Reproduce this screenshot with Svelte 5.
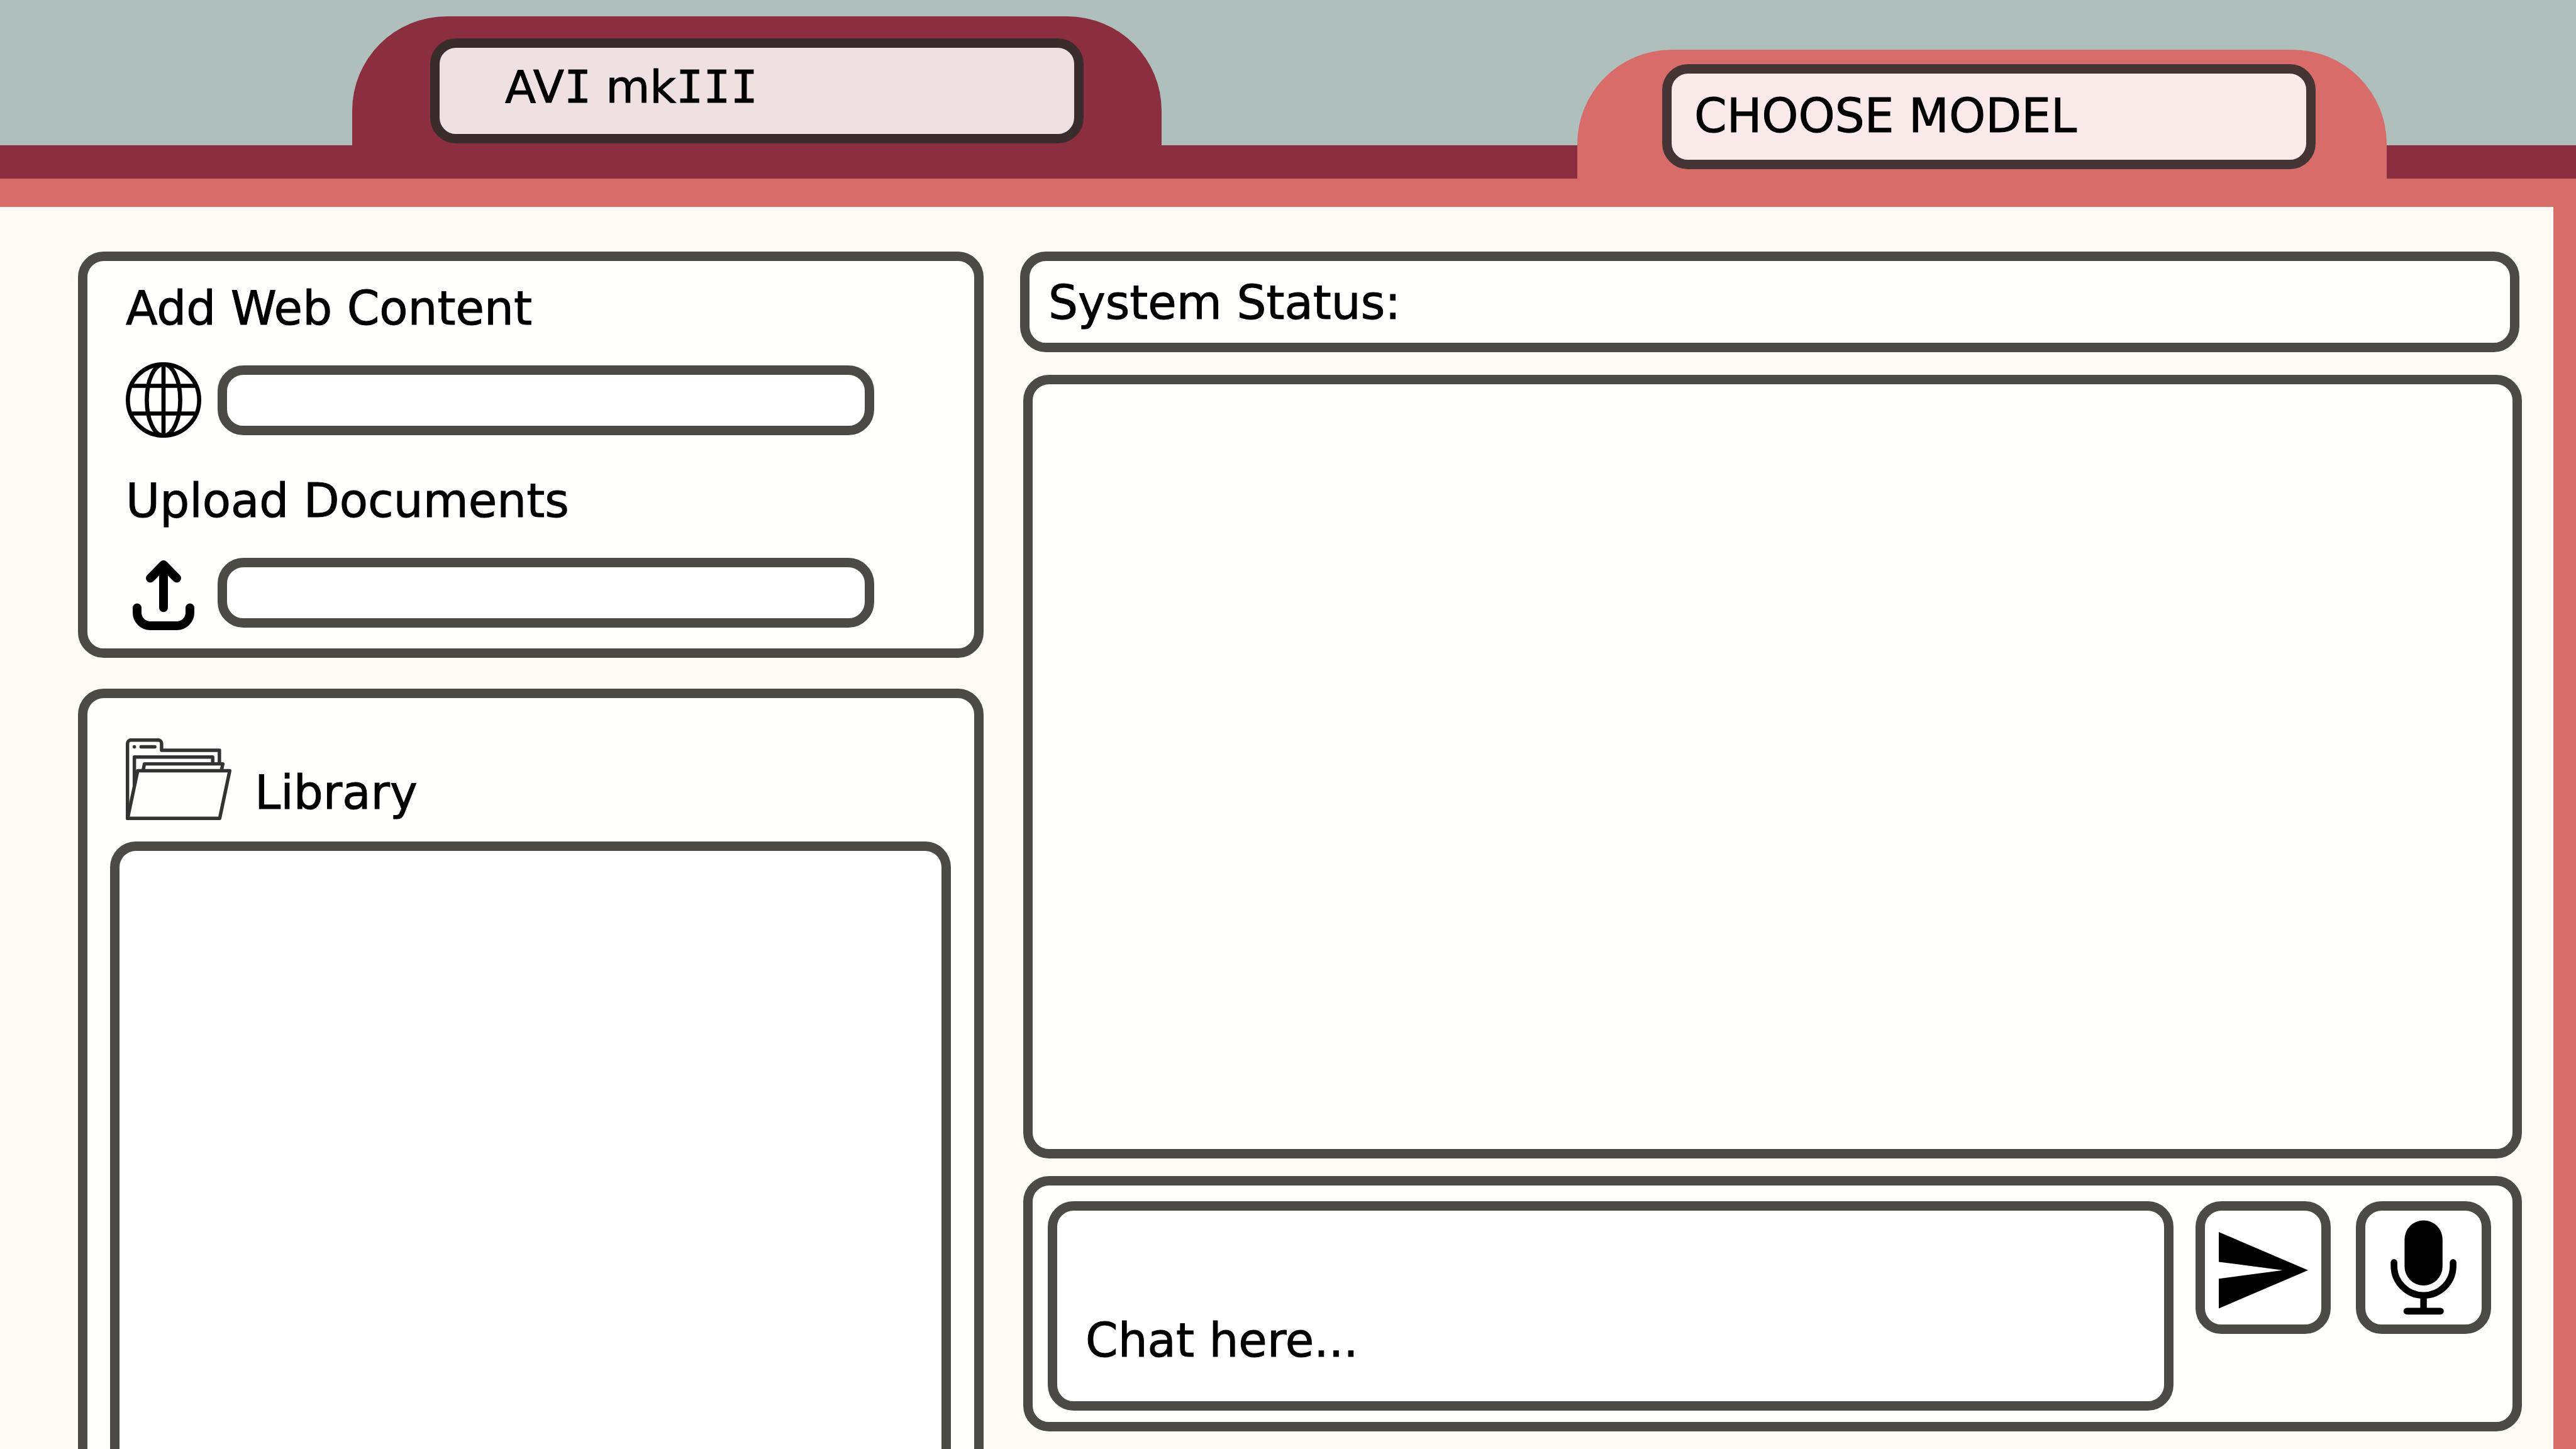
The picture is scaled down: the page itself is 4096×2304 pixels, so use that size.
<script>
  let url = $state('');
  let documentName = $state('');
  let message = $state('');
  let model = $state('');
</script>

<div class="app">
  <header class="tabs">
    <div class="tab tab-name">
      <h1 class="plate plate-name">AV<span class="slab">I</span> mk<span class="slab">III</span></h1>
    </div>
    <div class="tab tab-model">
      <select class="plate plate-model" aria-label="Choose model" bind:value={model}>
        <option value="">CHOOSE MODEL</option>
      </select>
    </div>
  </header>

  <main class="desk">
    <aside class="sidebar">
      <section class="panel sources">
        <label class="title" for="web-url">Add Web Content</label>
        <div class="source">
          <svg class="icon" viewBox="0 0 120 120" aria-hidden="true" fill="none" stroke="#000" stroke-width="6.6">
            <circle cx="60" cy="60" r="56.7" />
            <ellipse cx="60" cy="60" rx="26.6" ry="56.7" />
            <path d="M60 4V116M8 37.5H112M8 81.5H112" />
          </svg>
          <input id="web-url" class="field" type="text" bind:value={url} />
        </div>
        <label class="title second" for="document">Upload Documents</label>
        <div class="source">
          <svg class="icon" viewBox="0 0 120 120" aria-hidden="true" fill="none" stroke="#000" stroke-width="14" stroke-linecap="round" stroke-linejoin="round">
            <path d="M60 84.3V16M39 37.3L60 16L81 37.3" />
            <path d="M18 84.5V92a21 21 0 0 0 21 21H81a21 21 0 0 0 21-21V84.5" />
          </svg>
          <input id="document" class="field" type="text" bind:value={documentName} />
        </div>
      </section>

      <section class="panel library">
        <div class="library-head">
          <svg class="folder" viewBox="0 0 738 570" aria-hidden="true" fill="none" stroke="#333" stroke-width="24" stroke-linejoin="round" stroke-linecap="round">
            <path d="M12 558V36A24 24 0 0 1 36 12H226A24 24 0 0 1 250 36V83H654V175" />
            <path d="M60 330V130H607V175" />
            <path d="M123 215L130 178H678L670 215" />
            <path d="M13 558L83 226H726L656 558Z" fill="#fffffd" />
            <path d="M60 59H60.1M107 59H203" />
          </svg>
          <h2 class="title">Library</h2>
        </div>
        <div class="shelf"></div>
      </section>
    </aside>

    <section class="conversation">
      <div class="panel status" role="status">System Status:</div>
      <div class="panel transcript" role="log" aria-label="Conversation"></div>
      <form class="panel composer" onsubmit={(e) => e.preventDefault()}>
        <textarea class="message" aria-label="Message" placeholder="Chat here..." bind:value={message}></textarea>
        <button class="action" type="submit" aria-label="Send">
          <svg viewBox="15 15 185 181" aria-hidden="true">
            <path d="M37 49L179 109.8L37 170.5V123.2L138.6 109.8L37 96.4Z" />
          </svg>
        </button>
        <button class="action" type="button" aria-label="Record voice">
          <svg viewBox="15 15 185 181" aria-hidden="true">
            <rect x="77.4" y="30.5" width="60.4" height="103.5" rx="30.2" />
            <path d="M60.6 97.4V102.8a47 47 0 0 0 94 0V97.4" fill="none" stroke="#000" stroke-width="10.6" stroke-linecap="round" />
            <path d="M107.6 151V174" stroke="#000" stroke-width="10.4" />
            <rect x="75.7" y="169.4" width="64.1" height="10.8" rx="5.4" />
          </svg>
        </button>
      </form>
    </section>
  </main>
</div>

<style>
  :global(body) {
    margin: 0;
    background: #fffaf4;
  }

  .app,
  .app * {
    box-sizing: border-box;
  }

  .app {
    --ink: #4b4a47;
    --crimson: #8b2e40;
    --salmon: #d86c6b;
    --paper: #fffaf4;
    --panel: #fffffd;
    --stroke: 15px;
    --round: 41px;
    display: flex;
    flex-direction: column;
    min-height: 100vh;
    color: #000;
    font: 400 74px/88px 'DejaVu Sans', Verdana, sans-serif;
    -webkit-text-stroke: 1px #000;
  }

  h1,
  h2 {
    margin: 0;
    font: inherit;
  }

  input,
  select,
  textarea,
  button {
    margin: 0;
    font: inherit;
    color: inherit;
    appearance: none;
    outline: none;
  }

  /* Folder tabs along the top edge */
  .tabs {
    display: grid;
    grid-template-columns: 560fr 1287fr 661fr 1287fr 301fr;
    align-items: end;
    padding-top: 26px;
    background: linear-gradient(to top, var(--crimson) 53px, #afbfbb 53px);
  }

  .tab {
    border-radius: 150px 150px 0 0;
  }

  .tab-name {
    grid-column: 2;
    padding: 35px 124px 56px;
    background: var(--crimson);
  }

  .tab-model {
    grid-column: 4;
    padding: 23px 113px 15px 135px;
    background: var(--salmon);
  }

  .plate {
    display: flex;
    align-items: center;
    width: 100%;
    height: 167px;
    border: var(--stroke) solid;
    border-radius: var(--round);
  }

  .plate-name {
    padding: 0 104px 14px;
    border-color: #3a2b2c;
    background: #efe0e2;
    font-size: 72px;
    white-space: pre;
  }

  .slab {
    font-family: 'DejaVu Sans Mono', monospace;
  }

  .plate-model {
    padding: 0 36px 4px;
    border-color: #453434;
    background: #f9e9e8;
  }

  /* Working area */
  .desk {
    flex: 1;
    display: grid;
    grid-template-columns: 1440fr 2388fr;
    column-gap: 58px;
    padding: 71px 50px 0 124px;
    border: solid var(--salmon);
    border-width: 45px 36px 0 0;
    background: var(--paper);
  }

  .panel {
    border: var(--stroke) solid var(--ink);
    border-radius: var(--round);
    background: var(--panel);
  }

  .sidebar {
    display: flex;
    flex-direction: column;
    gap: 49px;
    min-width: 0;
  }

  .sources {
    padding: 31px 159px 29px 61px;
  }

  .title {
    display: block;
  }

  .second {
    margin-top: 56px;
  }

  .source {
    display: flex;
    align-items: center;
    gap: 26px;
    margin-top: 42px;
  }

  .icon {
    flex: none;
    width: 120px;
    height: 120px;
  }

  .field {
    flex: 1;
    min-width: 0;
    height: 111px;
    padding: 0 30px;
    border: var(--stroke) solid var(--ink);
    border-radius: var(--round);
    background: #fff;
  }

  .library {
    flex: 1;
    display: flex;
    flex-direction: column;
    padding: 64px 37px 0 36px;
    border-bottom: 0;
    border-radius: var(--round) var(--round) 0 0;
  }

  .library-head {
    display: flex;
    align-items: flex-end;
    gap: 37px;
    padding-left: 25px;
  }

  .folder {
    width: 168px;
    height: 130px;
  }

  .shelf {
    flex: 1;
    margin-top: 34px;
    border: var(--stroke) solid var(--ink);
    border-bottom: 0;
    border-radius: var(--round) var(--round) 0 0;
    background: #fff;
  }

  .conversation {
    display: flex;
    flex-direction: column;
    min-width: 0;
    padding-bottom: 28px;
  }

  .status {
    margin-right: 4px;
    padding: 22px 30px 20px;
  }

  .transcript {
    flex: 1;
    margin: 36px 0 28px 5px;
  }

  .composer {
    display: flex;
    align-items: flex-start;
    margin-left: 5px;
    padding: 25px 34px 18px 24px;
  }

  .message {
    flex: 1;
    min-width: 0;
    height: 333px;
    margin-right: 35px;
    padding: 162px 45px 0;
    border: var(--stroke) solid var(--ink);
    border-radius: var(--round);
    background: #fff;
    resize: none;
    overflow: hidden;
  }

  .message::placeholder {
    color: #000;
    opacity: 1;
  }

  .action {
    flex: none;
    width: 215px;
    height: 211px;
    padding: 0;
    border: var(--stroke) solid var(--ink);
    border-radius: var(--round);
    background: #fff;
    cursor: pointer;
  }

  .action + .action {
    margin-left: 40px;
  }

  .action svg {
    display: block;
    width: 100%;
    height: 100%;
  }
</style>
